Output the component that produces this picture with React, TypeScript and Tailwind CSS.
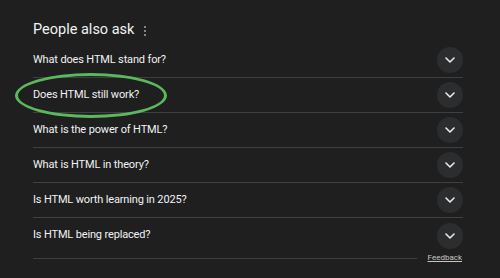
import React from "react";

const questions = [
  "What does HTML stand for?",
  "Does HTML still work?",
  "What is the power of HTML?",
  "What is HTML in theory?",
  "Is HTML worth learning in 2025?",
  "Is HTML being replaced?",
];

function Chevron() {
  return (
    <div className="w-[26px] h-[26px] rounded-full bg-[#2c2d2f] flex items-center justify-center">
      <svg width="10" height="6" viewBox="0 0 10 6" fill="none">
        <path d="M1 1l4 4 4-4" stroke="#e8eaed" strokeWidth="1.6" strokeLinecap="round" strokeLinejoin="round" />
      </svg>
    </div>
  );
}

export default function App() {
  return (
    <div
      className="relative w-[500px] h-[278px] bg-[#1f1f1f] overflow-hidden"
      style={{ fontFamily: 'Roboto, "Liberation Sans", Arial, sans-serif' }}
    >
      <div className="pl-[33px] pt-[18px] w-[463px]">
        <div className="h-[25px] flex items-center gap-[9px]">
          <span className="text-[14.5px] text-[#f1f3f4] leading-none">People also ask</span>
          <svg width="4" height="12" viewBox="0 0 4 12">
            <circle cx="2" cy="2" r="1.1" fill="#9aa0a6" />
            <circle cx="2" cy="6" r="1.1" fill="#9aa0a6" />
            <circle cx="2" cy="10" r="1.1" fill="#9aa0a6" />
          </svg>
        </div>
        {questions.map((q, i) => (
          <div
            key={q}
            className={
              i < questions.length - 1
                ? "h-[35px] flex items-center justify-between border-b border-[#3c4043]"
                : "h-[35px] flex items-center justify-between"
            }
          >
            <span className="text-[11px] tracking-[-0.15px] text-[#f1f3f4]">{q}</span>
            <Chevron />
          </div>
        ))}
        <div className="flex items-center h-[10px]">
          <div className="flex-1 h-px bg-[#3c4043]" />
          <span className="ml-[11px] mr-[1px] text-[8px] text-[#c4c7c5] underline leading-none">Feedback</span>
        </div>
      </div>
      <div className="absolute left-[15px] top-[73px] w-[152px] h-[45px] rounded-[50%] border-[3px] border-[#5cb85c]" />
    </div>
  );
}
